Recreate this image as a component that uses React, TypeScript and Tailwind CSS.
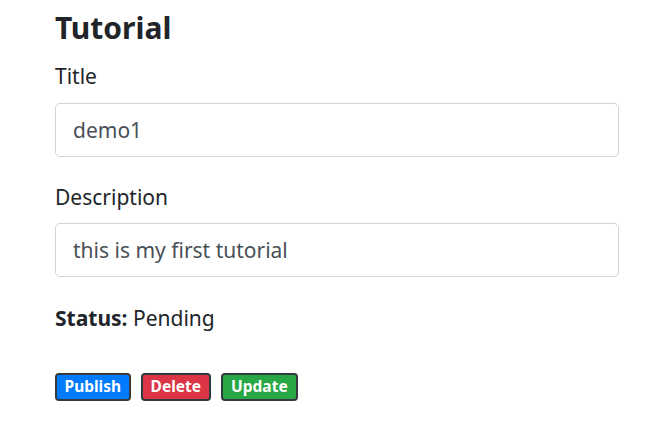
export default function App() {
  return (
    <div className="min-h-[421px] bg-white font-['Segoe_UI','Noto_Sans',sans-serif] text-[#212529]">
      <div className="w-[564px] ml-[55px] pt-[10px]">
        <h4 className="text-[30px] font-bold leading-[36px] mb-[15px]">Tutorial</h4>
        <form className="flex flex-col">
          <div className="mb-[25px]">
            <label className="block text-[21px] leading-[30px] mb-[12px]">Title</label>
            <input
              className="block w-full h-[54px] px-[17px] text-[21px] text-[#495057] border border-[#ced4da] rounded-[5px] outline-none"
              defaultValue="demo1"
            />
          </div>
          <div className="mb-[26px]">
            <label className="block text-[21px] leading-[30px] mb-[11px]">Description</label>
            <input
              className="block w-full h-[54px] px-[17px] text-[21px] text-[#495057] border border-[#ced4da] rounded-[5px] outline-none"
              defaultValue="this is my first tutorial"
            />
          </div>
          <div className="text-[21px] leading-[30px]">
            <strong>Status:</strong> Pending
          </div>
        </form>
        <div className="flex gap-[10px] mt-[40px]">
          <button className="h-[28px] px-[7.5px] text-[15.5px] font-bold text-white bg-[#007bff] border-2 border-[#343a40] rounded-[4px]">
            Publish
          </button>
          <button className="h-[28px] px-[8px] text-[15.5px] font-bold text-white bg-[#dc3545] border-2 border-[#343a40] rounded-[4px]">
            Delete
          </button>
          <button className="h-[28px] px-[8px] text-[15.5px] font-bold text-white bg-[#28a745] border-2 border-[#343a40] rounded-[4px]">
            Update
          </button>
        </div>
      </div>
    </div>
  );
}
